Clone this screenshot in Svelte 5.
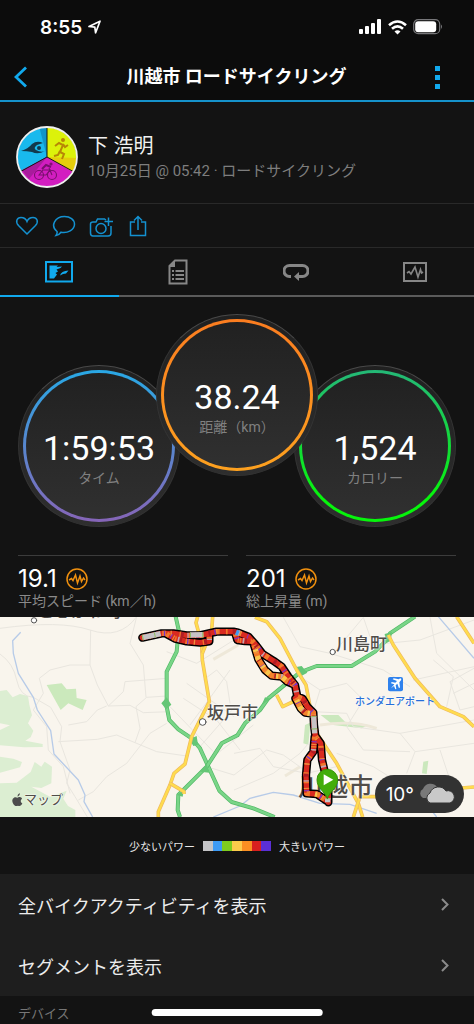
<script>
	const tabs = ["map", "details", "laps", "charts"]
	let activeTab = $state("map")

	const gauges = [
		{ id: "time", value: "1:59:53", label: "タイム" },
		{ id: "distance", value: "38.24", label: "距離（km）" },
		{ id: "calories", value: "1,524", label: "カロリー" }
	]

	const stats = [
		{ value: "19.1", label: "平均スピード (km／h)" },
		{ value: "201", label: "総上昇量 (m)" }
	]

	const powerColors = ["#c4c4c6", "#3d9bf5", "#7fcc1f", "#fccb4b", "#fb8f23", "#d9201f", "#5b2fd6"]

	const links = ["全バイクアクティビティを表示", "セグメントを表示"]

	// map shapes, three units to a pixel
	const greens = [
		"M0 243L20 240L38 262L60 252L84 258L88 284L96 316L84 340L100 362L92 382L76 392L128 402L128 411L72 412L0 406V360L30 346L0 340Z",
		"M0 440L40 446L66 456L60 472L0 488Z",
		"M0 520L50 518L92 486L104 456L124 470L134 455L156 470L154 520L124 534L94 530L150 560L200 542L190 566L204 588L226 600V621H0Z"
	]
	const minorRoads = [
		"M0 132Q40 160 50 210T100 262L152 292L185 350L180 395L210 480L200 520L225 560L262 621",
		"M0 55Q180 30 270 60T410 20",
		"M272 60L270 165L292 225L325 288L390 286L430 308L510 305",
		"M118 205L150 180L210 165L270 165",
		"M118 205L130 250L100 300L140 350L145 420L190 470L210 550",
		"M175 395L292 388L350 375L405 398L470 425L560 438",
		"M405 398L420 355L408 290L440 262L500 258",
		"M500 340L450 370L380 460L320 500L280 545L235 570",
		"M375 215L500 205M410 20L390 100L430 165L438 262",
		"M325 288L370 245L375 215M205 345L260 335L292 300L320 288",
		"M550 265L650 330L720 420M560 220L702 320M510 290L640 425",
		"M570 345L640 250L690 180M600 410L705 290M640 440L760 345",
		"M610 210L650 180L680 215L690 280M500 125L590 160L702 90",
		"M620 470L702 495L800 420L850 435L920 485",
		"M702 430L780 415L820 470L920 490L1010 470",
		"M850 22L900 110L990 130L1150 180L1230 230",
		"M1000 130L1090 22M1090 22L1110 80L1160 100L1260 90L1422 30",
		"M900 200L960 240L1040 220L1090 270L1040 350L1090 420L1230 425",
		"M960 240L940 305L1040 310L1060 350L1200 370L1422 330",
		"M1200 370L1245 425L1220 490M1245 425L1422 400M1320 420L1350 510",
		"M1300 150L1360 200L1340 290M1422 175L1350 215L1380 300L1422 290",
		"M1290 22L1310 130L1422 240M1240 210L1422 170M1360 250L1422 220",
		"M1010 430L1120 470L1200 520M702 540L820 490L900 430L960 360"
	]
	const yellowRoads = [
		"M593 20L588 38L605 100L607 150L628 275L600 330L575 380L555 462L522 490L510 525L475 605V621",
		"M638 20L635 60L607 130M510 520L552 545V552",
		"M765 22L800 35L840 85L890 180L918 225L930 290L950 370L1010 460L1075 580L1088 621",
		"M830 255L848 290L890 270M1060 621L1080 560H1160M1385 534L1422 531",
		"M1165 75L1180 105L1245 205L1320 290L1390 320L1422 350M1370 20L1422 100"
	]
	const greenRoads = [
		"M527 20L536 60L530 125L500 185V290L508 330L535 358L575 385L600 415L625 470L658 542L695 576L760 595L824 621",
		"M540 621L533 600L535 555L600 490L620 470L665 400L712 376L735 340L780 300L805 265L900 187L950 168L1055 168L1125 125L1158 92L1170 70L1245 20"
	]
	const rivers = [
		"M62 67L38 92L40 130L55 190L100 262L112 300L152 362L162 432L235 510L255 555L252 575L278 621",
		"M640 621L720 588L750 565L820 547L880 555L960 580L1050 583L1130 610",
		"M1315 20L1422 145M1270 570L1310 621"
	]
	const track = "M427 83L485 70L520 70L560 76L600 76L650 65L700 65L714 68L745 80L765 102L788 132L820 152L845 170L865 200L885 225L892 260L908 266L922 290L940 308L942 345L946 378L962 400L966 450L974 484L985 530V577M500 72L525 86L560 94L600 98L628 94V76M706 70L712 90L735 93L755 94M762 105L775 148L795 180L815 197L845 200L862 215L885 225M886 265L902 295L915 308L938 311M944 380L940 425L922 450L918 495L920 550L950 552L980 572"
	const paleTrack = "M427 83L482 71M941 318L944 370M983 565V577M570 75L610 74"
	const goldTrack = "M766 118L775 148L795 180L815 197L845 200L862 214M890 270L902 295L915 308L936 312M945 552L960 555"
</script>

{#snippet pulse()}
	<svg class="pulse" viewBox="0 0 22 22" aria-hidden="true">
		<circle cx="11" cy="11" r="10" />
		<path d="M3 12L5.500 10.500L7 12.500L9.500 7L11.500 15L14 8L15.500 13.500L17.500 10L19 12" />
	</svg>
{/snippet}

<main>
	<header>
		<div class="status">
			<div class="clock">
				<span>8:55</span>
				<svg width="13" height="14" viewBox="0 0 13 14"><path d="M1 6.500L12 1.200L7.600 12.800L6.800 7.200Z" fill="none" stroke="#fff" stroke-width="1.700" stroke-linejoin="round" /></svg>
			</div>
			<div class="signals">
				<svg width="23" height="16" viewBox="0 0 23 16" fill="#fff">
					<rect x="0" y="10" width="4" height="5" rx="1" /><rect x="6" y="7" width="4" height="8" rx="1" /><rect x="12" y="4" width="4" height="11" rx="1" /><rect x="18" y="0" width="4" height="15" rx="1" />
				</svg>
				<svg width="19" height="15" viewBox="0 0 19 15" fill="none" stroke="#fff" stroke-width="2.600">
					<path d="M1 5.200Q9.500 -2.200 18 5.200M4 8.800Q9.500 3.800 15 8.800" /><path d="M6.500 11.500Q9.500 8.800 12.500 11.500L9.500 14.600Z" fill="#fff" stroke="none" />
				</svg>
				<svg width="30" height="16" viewBox="0 0 30 16">
					<rect x=".7" y=".7" width="26" height="14" rx="4.500" fill="none" stroke="#77777a" stroke-width="1.200" /><rect x="2.200" y="2.200" width="21" height="11" rx="3" fill="#fff" /><path d="M28 5.500Q30 7.700 28 10Z" fill="#77777a" />
				</svg>
			</div>
		</div>
		<nav>
			<button aria-label="戻る"><svg width="14" height="22" viewBox="0 0 14 22"><path d="M12 1.500L2 11L12 20.500" fill="none" stroke="#11a9ed" stroke-width="2.800" /></svg></button>
			<h1>川越市 ロードサイクリング</h1>
			<button aria-label="メニュー"><svg width="6" height="24" viewBox="0 0 6 24" fill="#11a9ed"><path d="M0 1H5V6H0ZM0 10H5V15H0ZM0 19H5V24H0Z" /></svg></button>
		</nav>
	</header>

	<section class="profile">
		<svg class="avatar" viewBox="0 0 62 62" aria-hidden="true">
			<defs><clipPath id="face"><circle cx="31" cy="31" r="29.500" /></clipPath></defs>
			<g clip-path="url(#face)">
				<path d="M31 31V-4H-4V50Z" fill="#19b9ed" />
				<path d="M31 31V-4H66V50Z" fill="#dcf20b" />
				<path d="M31 31L-4 50V66H66V50Z" fill="#d21dc0" />
				<path d="M31 31L23 0H31Z" fill="#1195c9" />
				<path d="M31 31L64 32V50Z" fill="#e5cd0c" />
				<path d="M31 31L6 44L13 53Z" fill="#a91b9c" />
				<path d="M31 0V31L2 47M31 31L60 47" stroke="#171717" fill="none" />
				<path d="M5 25Q12 23 16 18Q21 14 27 17L21 19Q17 22 20 24Q25 27 29 25Q22 29 16 26Q11 25 5 25Z" fill="#12394c" />
				<circle cx="23" cy="22" r="2" fill="#12394c" />
				<circle cx="47" cy="14" r="2" fill="#b78706" />
				<path d="M39 20L43 17L47 19L44 26L48 28L46 33M44 25L42 29L38 30M47 18L49 21L52 19" fill="none" stroke="#b78706" stroke-width="2" />
				<g fill="none" stroke="#79106e" stroke-width="1.100">
					<circle cx="23" cy="49" r="4.500" /><circle cx="36" cy="49" r="4.500" /><path d="M23 49L27 44H34L30 49ZM33 42L36 49" /><path d="M26 43L30 39L35 41" stroke-width="2" /><circle cx="35" cy="38" r="1" />
				</g>
			</g>
			<circle cx="31" cy="31" r="30" fill="none" stroke="#f0f0f0" stroke-width="1.800" />
		</svg>
		<div>
			<h2>下 浩明</h2>
			<p>10月25日 @ 05:42 · ロードサイクリング</p>
		</div>
	</section>

	<section class="actions">
		<button aria-label="いいね"><svg viewBox="0 0 24 24"><path d="M12 20L3.500 11.500C0 7.500 2 3.500 6 3.500C9 3.500 11 5 12 7.500C13 5 15 3.500 18 3.500C22 3.500 24 7.500 20.500 11.500Z" /></svg></button>
		<button aria-label="コメント"><svg viewBox="0 0 24 24"><path d="M5 17.500C-2 12 3 2.500 12.500 2.500C18 2.500 22.500 5.800 22.500 10.300C22.500 16 15.500 19.500 9 18.200Q7 21 4 21.500Q5.500 19.500 5 17.500Z" /></svg></button>
		<button aria-label="写真を追加"><svg viewBox="0 0 24 24"><path d="M17 6L15.500 5H8.500L7 8H4Q1.500 8 1.500 10V19Q1.500 22 4 22H19Q22 22 22 19V12M19.500 3.500V12M15.500 7.500H24" /><circle cx="12" cy="14.500" r="5" /></svg></button>
		<button aria-label="共有"><svg viewBox="0 0 24 24"><path d="M9 8H4.500V21.500H19.500V8H15M12 16V2.500M8 6.500L12 2.500L16 6.500" /></svg></button>
	</section>

	<div class="tabs" role="tablist">
		{#each tabs as tab}
			<button role="tab" aria-label={tab} aria-selected={activeTab === tab} class:selected={activeTab === tab} onclick={() => activeTab = tab}>
				{#if tab === "map"}
					<svg width="28" height="22" viewBox="0 0 28 22"><path fill="none" stroke="currentColor" stroke-width="2" d="M1 1H27V20.500H1Z" /><path fill="currentColor" d="M4.500 4.500H13L11.500 6L17 5.500L15.500 7L11.500 8.500L13 10.500L10.500 12L12 13.500L9 17.500H4.500ZM15 14.500Q16 10 23.500 9.500L21 12.500L18 13Z" /></svg>
				{:else if tab === "details"}
					<svg width="20" height="26" viewBox="0 0 20 26"><path fill="none" stroke="currentColor" stroke-width="2" d="M7 1.500H18.500V24.500H1.500V7Z" /><path fill="currentColor" d="M1 7L7 1V8H1Z" /><path stroke="currentColor" stroke-width="2" d="M4 12H6M7.500 12H16M4 16H6M7.500 16H16M4 20H6M7.500 20H16" /></svg>
				{:else if tab === "laps"}
					<svg width="26" height="20" viewBox="0 0 26 20"><path fill="none" stroke="currentColor" stroke-width="3" d="M8 14.500H6.500A5 5 0 0 1 6.500 3.500H19.500A5 5 0 0 1 19.500 14.500H15" /><path fill="currentColor" d="M11 14.500L16 10V19Z" /></svg>
				{:else}
					<svg width="24" height="20" viewBox="0 0 24 20"><path fill="none" stroke="currentColor" stroke-width="2" d="M1 1H23V19H1Z" /><path fill="none" stroke="currentColor" stroke-width="1.600" d="M4 11L6 9.500L8 12L12 5L15 15L17.500 7.500L18.500 11L20 10" /></svg>
				{/if}
			</button>
		{/each}
	</div>

	<section class="gauges">
		{#each gauges as gauge}
			<div class="gauge {gauge.id}">
				<div class="ring">
					<div class="dial">
						<strong>{gauge.value}</strong>
						<span>{gauge.label}</span>
					</div>
				</div>
			</div>
		{/each}
	</section>

	<section class="stats">
		{#each stats as stat}
			<div class="stat">
				<div class="reading"><strong>{stat.value}</strong>{@render pulse()}</div>
				<span>{stat.label}</span>
			</div>
		{/each}
	</section>

	<section class="map">
		<svg class="canvas" viewBox="0 21 1422 600" preserveAspectRatio="xMidYMid slice" fill="none" stroke-linejoin="round" aria-hidden="true">
			<rect y="21" width="1422" height="600" fill="#f9f5ed" />
			{#each greens as d}<path {d} fill="#dceed2" />{/each}
			<path d="M140 225L185 220L200 238L228 236L230 264L260 270L248 300L205 280L182 300Z" fill="#cbe9bc" />
			<path d="M962 315H1015L1035 335L1105 345L1085 355L1000 345ZM915 345L960 325L930 350L925 405L910 400ZM1270 455L1285 452L1280 492L1266 490Z" fill="#cbe8bd" />
			<path d="M640 148L715 105M855 498L900 470M960 345Q1060 330 1130 355" stroke="#eee8d9" stroke-width="9" />
			<g stroke="#e9e6df" stroke-width="3">{#each minorRoads as d}<path {d} />{/each}</g>
			<g stroke="#b7cbe8" stroke-width="4">{#each rivers as d}<path {d} />{/each}</g>
			{#each greenRoads as d}
				<path {d} stroke="#51b765" stroke-width="12" /><path {d} stroke="#79d587" stroke-width="8" />
			{/each}
			<path d="M484 280L500 262L514 284L498 298ZM568 388L590 378L594 404L580 408ZM600 485L620 462L628 488ZM885 172L905 168L922 188L900 200ZM1154 72L1176 66L1172 92L1158 100ZM785 285L795 262L812 266ZM530 555L552 540L548 560Z" fill="#65c676" />
			{#each yellowRoads as d}
				<path {d} stroke="#eeb961" stroke-width="11" /><path {d} stroke="#ffdc4e" stroke-width="7" />
			{/each}
		</svg>

		<span class="place town" style="left: 37px; top: -18px">ときがわ町</span>
		<span class="place town" style="left: 207px; top: 84px">坂戸市</span>
		<span class="place town" style="left: 336px; top: 15px">川島町</span>
		<span class="place city" style="left: 298px; top: 153px">川越市</span>
		<span class="place airport" style="left: 355px; top: 76px">ホンダエアポート</span>

		<svg class="canvas" viewBox="0 21 1422 600" preserveAspectRatio="xMidYMid slice" fill="none" stroke-linejoin="round" stroke-linecap="round" aria-hidden="true">
			<g fill="#fff" stroke="#555" stroke-width="3"><circle cx="102" cy="31" r="8" /><circle cx="608" cy="336" r="10" /><circle cx="998" cy="126" r="8" /></g>
			<path d={track} stroke="#000" stroke-width="25" />
			<path d={track} stroke="#d92a20" stroke-width="16" />
			<g stroke-linecap="butt" stroke-width="16">
				<path d={goldTrack} stroke="#f2832c" />
				<path d={track} stroke="#f2782a" stroke-dasharray="9 19 5 28 12 40" />
				<path d={track} stroke="#f0913c" stroke-dasharray="0 22 3 61 4 48" />
				<path d={track} stroke="#c4a5ae" stroke-dasharray="0 37 5 95 4 113" />
				<path d={track} stroke="#7933c8" stroke-dasharray="0 14 3 49 4 83" />
				<path d={track} stroke="#b01c25" stroke-dasharray="0 44 6 67 9 31" />
				<path d={goldTrack} stroke="#f9c64c" stroke-dasharray="7 14 12 21" />
				<path d={paleTrack} stroke="#c6c3c5" />
				<path d={paleTrack} stroke="#92bd64" stroke-dasharray="3 34" />
				<path d="M708 67L716 70" stroke="#3d9bf5" />
			</g>
			<path d="M982 565C975 545 951 535 951 509A31 31 0 0 1 1013 509C1013 535 989 545 982 565Z" fill="#42ad0b" stroke="#379409" stroke-width="3" />
			<path d="M971 493V526L1000 509Z" fill="#fff" />
			<rect x="1164" y="201" width="45" height="43" rx="6" fill="#2f82ed" />
			<path d="M1173 235L1183 223L1173 220L1175 216L1186 218L1191 213L1178 208L1181 205L1196 208L1201 205L1204 207L1203 211L1198 217L1200 232L1197 235L1192 221L1187 226L1189 237L1186 238L1182 228Z" fill="#fff" />
			<path d="M42 563C48 559 51 565 55 562C61 559 65 563 66 566C60 571 62 577 67 580C64 588 59 589 54 587C49 588 45 590 40 582C35 574 36 566 42 563ZM53 560Q52 552 60 550Q60 558 53 560Z" fill="#4c4c4c" />
		</svg>
		<span class="place credit" style="left: 24px; top: 172px">マップ</span>

		<div class="weather">
			<span>10°</span>
			<svg width="36" height="22" viewBox="0 0 36 22">
				<path d="M4 15A5 5 0 0 1 4 6A8 8 0 0 1 18 4A7 7 0 0 1 24 12V15Z" fill="#797979" />
				<path d="M11 20A5.500 5.500 0 0 1 11 10A9 9 0 0 1 27 8A6 6 0 0 1 31 20Z" fill="#c9c9c9" stroke="#333" />
			</svg>
		</div>
	</section>

	<section class="legend">
		<span>少ないパワー</span>
		<div class="scale">
			{#each powerColors as color}<i style="background: {color}"></i>{/each}
		</div>
		<span>大きいパワー</span>
	</section>

	<section class="links">
		{#each links as link}
			<a href="#top">
				{link}
				<svg width="8" height="13" viewBox="0 0 8 13"><path d="M1 1L6.500 6.500L1 12" fill="none" stroke="#8b8b8b" stroke-width="2" /></svg>
			</a>
		{/each}
	</section>

	<h3>デバイス</h3>
	<div class="home"></div>
</main>

<style>
	:global(body) {
		background: #131313;
	}

	main {
		font-family: Inter, "Noto Sans CJK JP", sans-serif;
		color: #fff;
		background: #131313;
		height: 100vh;
		overflow: hidden;
	}

	h1, h2, h3, p {
		margin: 0;
		font-weight: 400;
	}

	button {
		background: none;
		border: 0;
		padding: 0;
		color: inherit;
		display: flex;
		align-items: center;
		justify-content: center;
	}

	svg {
		display: block;
		flex: none;
	}

	header {
		background: #0c0c0c;
		border-bottom: 2px solid #1592cb;
	}

	.status {
		display: flex;
		justify-content: space-between;
		padding: 15px 31px 0 40px;
		height: 24px;
		align-items: center;
	}

	.clock, .signals {
		display: flex;
		align-items: center;
		gap: 6px;
	}

	.clock {
		font-size: 19px;
		font-weight: 600;
	}

	nav {
		display: flex;
		align-items: center;
		justify-content: space-between;
		height: 46px;
		padding: 15px 33px 0 14px;
	}

	nav button {
		height: 44px;
	}

	h1 {
		font-size: 18px;
		line-height: 24px;
		font-weight: 700;
		padding-left: 10px;
	}

	.profile {
		display: flex;
		align-items: center;
		gap: 10px;
		height: 93px;
		padding: 8px 16px 0;
		border-bottom: 1px solid #292929;
	}

	.avatar {
		width: 62px;
		height: 62px;
	}

	h2 {
		font-size: 20px;
		line-height: 28px;
		color: #f0f0f0;
	}

	p {
		font-family: Roboto, "Noto Sans CJK JP", sans-serif;
		font-size: 15px;
		line-height: 22px;
		color: #7e7e7e;
	}

	.actions {
		display: flex;
		gap: 13px;
		padding: 0 15px;
		height: 43px;
		border-bottom: 1px solid #292929;
	}

	.actions svg {
		width: 24px;
		height: 24px;
		fill: none;
		stroke: #1491d0;
		stroke-width: 1.5;
	}

	.tabs {
		display: flex;
	}

	.tabs button {
		flex: 1;
		height: 49px;
		color: #878787;
		border-bottom: 2px solid #5b5b5b;
	}

	.tabs .selected {
		color: #11a9ed;
		border-bottom-color: #11a9ed;
	}

	.gauges {
		display: flex;
		justify-content: center;
		padding: 17px 0 28px;
	}

	.gauge {
		width: 152px;
		height: 152px;
		padding: 4px;
		margin: 51px -12px 0;
		border: 1px solid #333;
		border-top-color: #494949;
		border-radius: 50%;
		background: linear-gradient(#202020, #2e2e2e);
	}

	.distance {
		position: relative;
		margin-top: 0;
		margin-bottom: 51px;
	}

	.ring {
		height: 146px;
		padding: 3px;
		border-radius: 50%;
		background: linear-gradient(#29a8e5, #8665b8);
	}

	.distance .ring {
		background: linear-gradient(#fb7d20, #fda11f);
	}

	.calories .ring {
		background: linear-gradient(#24b877, #06f50b 85%);
	}

	.dial {
		height: 122px;
		padding-top: 24px;
		border-radius: 50%;
		background: linear-gradient(#212121, #303030);
		display: flex;
		flex-direction: column;
		align-items: center;
		justify-content: center;
		font-family: Roboto, "Noto Sans CJK JP", sans-serif;
	}

	.dial strong {
		font-size: 34px;
		line-height: 40px;
		font-weight: 400;
	}

	.dial span {
		font-size: 14px;
		line-height: 20px;
		color: #808080;
	}

	.stats {
		display: flex;
		gap: 18px;
		padding: 0 18px 8px;
	}

	.stat {
		flex: 1;
		border-top: 1px solid #3c3c3c;
		padding-top: 9px;
	}

	.reading {
		display: flex;
		align-items: center;
		gap: 9px;
	}

	.reading strong {
		font-size: 24px;
		line-height: 28px;
		font-weight: 400;
	}

	.pulse {
		width: 22px;
		height: 22px;
		fill: none;
		stroke: #f0900f;
		stroke-width: 1.5;
	}

	.stat span {
		display: block;
		font-family: Roboto, "Noto Sans CJK JP", sans-serif;
		font-size: 14px;
		line-height: 16px;
		color: #8a8a8a;
	}

	.map {
		position: relative;
		height: 200px;
		overflow: hidden;
	}

	.canvas {
		position: absolute;
		width: 100%;
		height: 100%;
	}

	.place {
		position: absolute;
		white-space: nowrap;
		color: #514d49;
		text-shadow: 0 0 2px #fff, 0 0 2px #fff;
	}

	.town {
		font-size: 17px;
		line-height: 24px;
		font-weight: 500;
	}

	.city {
		font-size: 25px;
		line-height: 34px;
		font-weight: 500;
	}

	.airport {
		font-size: 10px;
		line-height: 16px;
		font-weight: 500;
		color: #266ed8;
	}

	.credit {
		font-size: 13px;
		line-height: 20px;
	}

	.weather {
		position: absolute;
		right: 10px;
		bottom: 4px;
		display: flex;
		align-items: center;
		gap: 5px;
		height: 38px;
		padding: 0 9px 0 11px;
		border-radius: 19px;
		background: #323232;
		font-size: 19px;
	}

	.legend {
		display: flex;
		align-items: center;
		justify-content: center;
		gap: 8px;
		height: 57px;
		font-size: 11px;
		color: #e6e6e6;
	}

	.scale {
		display: flex;
		width: 68px;
		height: 10px;
	}

	.scale i {
		flex: 1;
	}

	.links {
		background: #1e1e1e;
	}

	.links a {
		display: flex;
		align-items: center;
		justify-content: space-between;
		height: 61px;
		padding: 0 25px 0 18px;
		font-size: 18px;
		color: #ececec;
		text-decoration: none;
	}

	h3 {
		padding: 7px 18px;
		font-size: 13px;
		line-height: 20px;
		color: #777;
	}

	.home {
		position: fixed;
		left: 50%;
		bottom: 8px;
		width: 36%;
		height: 7px;
		border-radius: 4px;
		background: #fff;
		transform: translateX(-50%);
	}
</style>
